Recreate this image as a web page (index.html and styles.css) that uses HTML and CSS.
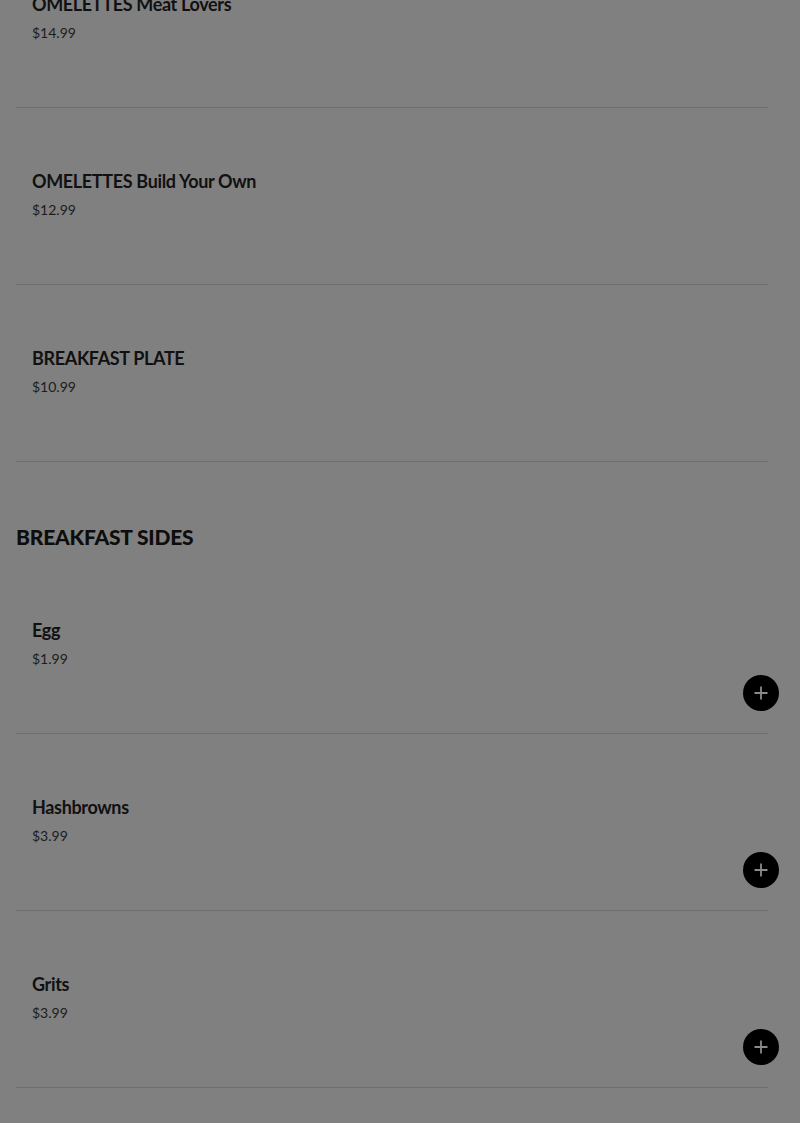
FILE: index.html
```html
<!DOCTYPE html>
<html>
<head>
<meta charset="utf-8">
<link rel="stylesheet" href="styles.css">
</head>
<body>
<main class="menu">
  <div class="card first">
    <div class="name">OMELETTES Meat Lovers</div>
    <div class="price">$14.99</div>
  </div>
  <div class="card">
    <div class="name">OMELETTES Build Your Own</div>
    <div class="price">$12.99</div>
  </div>
  <div class="card">
    <div class="name">BREAKFAST PLATE</div>
    <div class="price">$10.99</div>
  </div>
  <h2 class="section">BREAKFAST SIDES</h2>
  <div class="card">
    <div class="name">Egg</div>
    <div class="price">$1.99</div>
    <button class="add" aria-label="Add"><svg viewBox="0 0 16 16" width="16" height="16"><path d="M8 1.5v13M1.5 8h13" stroke="#8a8a8a" stroke-width="1.8" fill="none"/></svg></button>
  </div>
  <div class="card">
    <div class="name">Hashbrowns</div>
    <div class="price">$3.99</div>
    <button class="add" aria-label="Add"><svg viewBox="0 0 16 16" width="16" height="16"><path d="M8 1.5v13M1.5 8h13" stroke="#8a8a8a" stroke-width="1.8" fill="none"/></svg></button>
  </div>
  <div class="card">
    <div class="name">Grits</div>
    <div class="price">$3.99</div>
    <button class="add" aria-label="Add"><svg viewBox="0 0 16 16" width="16" height="16"><path d="M8 1.5v13M1.5 8h13" stroke="#8a8a8a" stroke-width="1.8" fill="none"/></svg></button>
  </div>
</main>
</body>
</html>
```
FILE: styles.css
```css
html, body {
  margin: 0;
  padding: 0;
  background: #808080;
  overflow: hidden;
}
body {
  font-family: "Lato", "Open Sans", sans-serif;
  color: #111;
}
.menu {
  width: 752px;
  margin: -69px 0 0 16px;
}
.card {
  position: relative;
  box-sizing: border-box;
  height: 177px;
  padding: 61px 16px 0;
  border-bottom: 1px solid #6e6e6e;
}
.name {
  font-size: 18px;
  font-weight: 700;
  line-height: 24px;
  letter-spacing: -0.35px;
  color: #111;
}
.price {
  margin-top: 6px;
  font-size: 14px;
  line-height: 22px;
  color: #1c1c1c;
}
.section {
  margin: 61px 0 6px;
  font-size: 21px;
  line-height: 28px;
  font-weight: 900;
  letter-spacing: -0.2px;
  color: #0d0d0d;
}
.add {
  position: absolute;
  right: -11px;
  bottom: 22px;
  width: 36px;
  height: 36px;
  padding: 0;
  border: none;
  border-radius: 50%;
  background: #000;
  display: flex;
  align-items: center;
  justify-content: center;
}
.add svg {
  display: block;
}
```
